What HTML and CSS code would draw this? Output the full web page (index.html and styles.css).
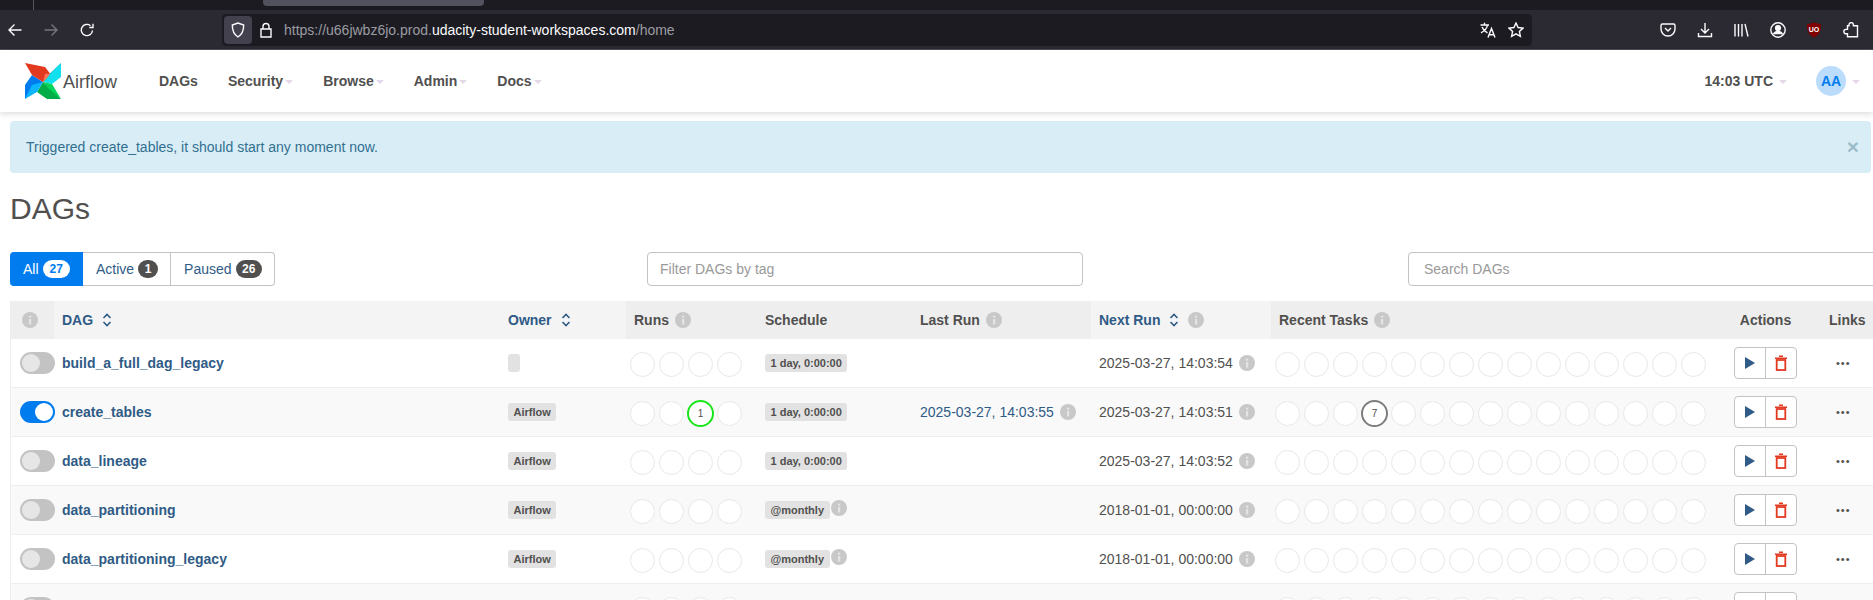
FILE: index.html
```html
<!DOCTYPE html>
<html lang="en">
<head>
    <meta charset="UTF-8">
    <title>Airflow - DAGs</title>
    <link rel="stylesheet" href="styles.css">
</head>
<body>
    <svg class="defs" width="0" height="0">
        <symbol id="info" viewBox="0 0 16 16">
            <circle cx="8" cy="8" r="8" fill="#c8c8c8"/>
            <rect x="7" y="7" width="2.2" height="5.5" fill="#e4e4e4"/>
            <rect x="7" y="3.6" width="2.2" height="2.2" fill="#e4e4e4"/>
        </symbol>
        <symbol id="sort" viewBox="0 0 10 14">
            <path d="M1.5 5 5 1.5 8.500 5M1.500 9 5 12.500 8.500 9" fill="none" stroke="currentColor" stroke-width="1.600"/>
        </symbol>
        <symbol id="play" viewBox="0 0 10 12">
            <path d="M0 0 10 6 0 12z" fill="#2f5b86"/>
        </symbol>
        <symbol id="trash" viewBox="0 0 12 16">
            <path d="M0 2.500h12V4H0zM4 .500h4V2H4z" fill="#e43921"/>
            <rect x="1.700" y="5" width="8.600" height="10" fill="none" stroke="#e43921" stroke-width="1.800"/>
        </symbol>
    </svg>

    <!-- browser chrome -->
    <div class="tabstrip">
        <span class="tab-sep"></span>
        <span class="tab"></span>
    </div>
    <div class="toolbar">
        <div class="nav-arrows">
            <svg class="tb-icon" viewBox="0 0 14 14"><path d="M13.500 7H1M6.500 1.500 1 7l5.500 5.500"/></svg>
            <svg class="tb-icon dim" viewBox="0 0 14 14"><path d="M.5 7H13M7.500 1.500 13 7l-5.500 5.500"/></svg>
            <svg class="tb-icon" viewBox="0 0 14 14"><path d="M12.500 7.500A5.600 5.600 0 1 1 10.500 2.700M13 .8v3.700H9.300"/></svg>
        </div>
        <div class="urlbar">
            <span class="shield-box">
                <svg class="tb-icon" viewBox="0 0 14 16"><path d="M7 1 1.300 3c0 6 1.500 9.500 5.700 12 4.200-2.500 5.700-6 5.700-12z"/></svg>
            </span>
            <svg class="lock" viewBox="0 0 12 16"><path d="M3 7V4.500a3 3 0 0 1 6 0V7M1 7h10v8H1z"/></svg>
            <span class="url">https://u66jwbz6jo.prod.<b>udacity-student-workspaces.com</b>/home</span>
            <div class="url-right">
                <svg class="tb-icon wide" viewBox="0 0 16 16"><path d="M.5 3h8.500M4.500 .8V3M7.500 3c-.5 3.500-3 6-6.500 7.800M2 5c1 2.500 3 4.500 5.500 5.800M8 15.500l3.500-9 3.500 9M9.200 12.800h4.600"/></svg>
                <svg class="tb-icon wide" viewBox="0 0 16 16"><path d="m8 1 2.100 4.500 4.900.6-3.600 3.300 1 4.900L8 11.800l-4.400 2.500 1-4.900L1 6.100l4.900-.6z"/></svg>
            </div>
        </div>
        <div class="tool-icons">
            <svg class="tb-icon wide" viewBox="0 0 16 16"><path d="M2.500 2h11A1.500 1.500 0 0 1 15 3.500V7A7 7 0 0 1 1 7V3.500A1.500 1.500 0 0 1 2.500 2zM5 6l3 3 3-3"/></svg>
            <svg class="tb-icon wide" viewBox="0 0 16 16"><path d="M8 1v10M4 7l4 4 4-4M1.500 11v3.500h13V11"/></svg>
            <svg class="tb-icon wide" viewBox="0 0 16 16"><path d="M2 2v12.500M5.500 2v12.500M9 2v12.500M12 2l3 12.500"/></svg>
            <svg class="tb-icon wide" viewBox="0 0 16 16"><circle cx="8" cy="8" r="7.200"/><circle cx="8" cy="6" r="2.400" fill="#fbfbfe"/><path d="M3.500 12.300c1-2 2.500-2.800 4.500-2.800s3.500.8 4.500 2.800" fill="#fbfbfe"/></svg>
            <svg class="ublock" viewBox="0 0 16 16"><path d="M8 .5 15 2.500c.3 6.500-1.800 10.500-7 13-5.200-2.500-7.300-6.500-7-13z" fill="#800000"/><text x="8" y="10.300" text-anchor="middle" class="ublock-text">UO</text></svg>
            <svg class="tb-icon wide" viewBox="0 0 16 16"><path d="M6 2.800a2.200 2.200 0 0 1 4.400 0v1h4.100v11h-10v-3H3a2.200 2.200 0 0 1 0-4.400h1.500V3.800H6z"/></svg>
        </div>
    </div>

    <!-- airflow navbar -->
    <nav class="navbar">
        <a class="brand">
            <svg class="pinwheel" viewBox="0 0 36 36">
                <path d="M36 0 25 10.500 18 19 30 15.500z" fill="#00b4c8"/>
                <path d="M36 0V14L27 21 18 19z" fill="#11e1ee"/>
                <path d="M36 36H22L12 29 18 19z" fill="#00ad46"/>
                <path d="M36 36 27 21 18 19 24 26z" fill="#04d659"/>
                <path d="M0 36V22L7 12 18 19z" fill="#017cee"/>
                <path d="M0 36 12 29 18 19 7 22z" fill="#0cb6ff"/>
                <path d="M0 0 20 4 25 10.500 18 19 7 12z" fill="#e43921"/>
                <path d="M25 10.500 22 15 18 19 20 11z" fill="#ff7557"/>
            </svg>
            <span class="brand-name">Airflow</span>
        </a>
        <a class="nav-link">DAGs</a>
        <a class="nav-link">Security<i class="caret"></i></a>
        <a class="nav-link">Browse<i class="caret"></i></a>
        <a class="nav-link">Admin<i class="caret"></i></a>
        <a class="nav-link">Docs<i class="caret"></i></a>
        <div class="nav-right">
            <a class="nav-link clock">14:03 UTC<i class="caret"></i></a>
            <span class="avatar">AA</span><i class="caret"></i>
        </div>
    </nav>

    <main class="content">
        <div class="alert">
            <span>Triggered create_tables, it should start any moment now.</span>
            <span class="alert-close">×</span>
        </div>

        <h2 class="title">DAGs</h2>

        <div class="filters">
            <div class="pills">
                <a class="pill active">All <span class="count">27</span></a>
                <a class="pill">Active <span class="count">1</span></a>
                <a class="pill">Paused <span class="count">26</span></a>
            </div>
            <input class="filter-input tags" type="text" placeholder="Filter DAGs by tag">
            <input class="filter-input search" type="text" placeholder="Search DAGs">
        </div>

        <table class="dags">
            <colgroup>
                <col class="c-info"><col class="c-dag"><col class="c-owner"><col class="c-runs"><col class="c-sched">
                <col class="c-last"><col class="c-next"><col class="c-tasks"><col class="c-actions"><col class="c-links">
            </colgroup>
            <thead>
                <tr>
                    <th class="center"><svg class="i16"><use href="#info"/></svg></th>
                    <th class="sortable"><span class="th-in">DAG <svg class="sort"><use href="#sort"/></svg></span></th>
                    <th class="sortable"><span class="th-in">Owner <svg class="sort"><use href="#sort"/></svg></span></th>
                    <th><span class="th-in">Runs <svg class="i16"><use href="#info"/></svg></span></th>
                    <th>Schedule</th>
                    <th><span class="th-in">Last Run <svg class="i16"><use href="#info"/></svg></span></th>
                    <th class="sortable"><span class="th-in">Next Run <svg class="sort"><use href="#sort"/></svg> <svg class="i16"><use href="#info"/></svg></span></th>
                    <th><span class="th-in">Recent Tasks <svg class="i16"><use href="#info"/></svg></span></th>
                    <th class="th-actions">Actions</th>
                    <th>Links</th>
                </tr>
            </thead>
            <tbody>
                <tr>
                    <td colspan="2" class="name-td"><div class="name-cell"><span class="switch"></span><a class="dag-link">build_a_full_dag_legacy</a></div></td>
                    <td><span class="badge empty"></span></td>
                    <td class="dots-cell"><div class="dots"><i></i><i></i><i></i><i></i></div></td>
                    <td><span class="badge">1 day, 0:00:00</span></td>
                    <td></td>
                    <td><span class="when">2025-03-27, 14:03:54 <svg class="i16"><use href="#info"/></svg></span></td>
                    <td class="dots-cell"><div class="dots"><i></i><i></i><i></i><i></i><i></i><i></i><i></i><i></i><i></i><i></i><i></i><i></i><i></i><i></i><i></i></div></td>
                    <td><div class="btns"><a class="btn"><svg class="play"><use href="#play"/></svg></a><a class="btn"><svg class="trash"><use href="#trash"/></svg></a></div></td>
                    <td class="more">•••</td>
                </tr>
                <tr>
                    <td colspan="2" class="name-td"><div class="name-cell"><span class="switch on"></span><a class="dag-link">create_tables</a></div></td>
                    <td><span class="badge">Airflow</span></td>
                    <td class="dots-cell"><div class="dots"><i></i><i></i><i class="success">1</i><i></i></div></td>
                    <td><span class="badge">1 day, 0:00:00</span></td>
                    <td><span class="when link">2025-03-27, 14:03:55 <svg class="i16"><use href="#info"/></svg></span></td>
                    <td><span class="when">2025-03-27, 14:03:51 <svg class="i16"><use href="#info"/></svg></span></td>
                    <td class="dots-cell"><div class="dots"><i></i><i></i><i></i><i class="none">7</i><i></i><i></i><i></i><i></i><i></i><i></i><i></i><i></i><i></i><i></i><i></i></div></td>
                    <td><div class="btns"><a class="btn"><svg class="play"><use href="#play"/></svg></a><a class="btn"><svg class="trash"><use href="#trash"/></svg></a></div></td>
                    <td class="more">•••</td>
                </tr>
                <tr>
                    <td colspan="2" class="name-td"><div class="name-cell"><span class="switch"></span><a class="dag-link">data_lineage</a></div></td>
                    <td><span class="badge">Airflow</span></td>
                    <td class="dots-cell"><div class="dots"><i></i><i></i><i></i><i></i></div></td>
                    <td><span class="badge">1 day, 0:00:00</span></td>
                    <td></td>
                    <td><span class="when">2025-03-27, 14:03:52 <svg class="i16"><use href="#info"/></svg></span></td>
                    <td class="dots-cell"><div class="dots"><i></i><i></i><i></i><i></i><i></i><i></i><i></i><i></i><i></i><i></i><i></i><i></i><i></i><i></i><i></i></div></td>
                    <td><div class="btns"><a class="btn"><svg class="play"><use href="#play"/></svg></a><a class="btn"><svg class="trash"><use href="#trash"/></svg></a></div></td>
                    <td class="more">•••</td>
                </tr>
                <tr>
                    <td colspan="2" class="name-td"><div class="name-cell"><span class="switch"></span><a class="dag-link">data_partitioning</a></div></td>
                    <td><span class="badge">Airflow</span></td>
                    <td class="dots-cell"><div class="dots"><i></i><i></i><i></i><i></i></div></td>
                    <td><span class="sched"><span class="badge">@monthly</span><svg class="i16"><use href="#info"/></svg></span></td>
                    <td></td>
                    <td><span class="when">2018-01-01, 00:00:00 <svg class="i16"><use href="#info"/></svg></span></td>
                    <td class="dots-cell"><div class="dots"><i></i><i></i><i></i><i></i><i></i><i></i><i></i><i></i><i></i><i></i><i></i><i></i><i></i><i></i><i></i></div></td>
                    <td><div class="btns"><a class="btn"><svg class="play"><use href="#play"/></svg></a><a class="btn"><svg class="trash"><use href="#trash"/></svg></a></div></td>
                    <td class="more">•••</td>
                </tr>
                <tr>
                    <td colspan="2" class="name-td"><div class="name-cell"><span class="switch"></span><a class="dag-link">data_partitioning_legacy</a></div></td>
                    <td><span class="badge">Airflow</span></td>
                    <td class="dots-cell"><div class="dots"><i></i><i></i><i></i><i></i></div></td>
                    <td><span class="sched"><span class="badge">@monthly</span><svg class="i16"><use href="#info"/></svg></span></td>
                    <td></td>
                    <td><span class="when">2018-01-01, 00:00:00 <svg class="i16"><use href="#info"/></svg></span></td>
                    <td class="dots-cell"><div class="dots"><i></i><i></i><i></i><i></i><i></i><i></i><i></i><i></i><i></i><i></i><i></i><i></i><i></i><i></i><i></i></div></td>
                    <td><div class="btns"><a class="btn"><svg class="play"><use href="#play"/></svg></a><a class="btn"><svg class="trash"><use href="#trash"/></svg></a></div></td>
                    <td class="more">•••</td>
                </tr>
                <tr>
                    <td colspan="2" class="name-td"><div class="name-cell"><span class="switch"></span></div></td>
                    <td></td>
                    <td class="dots-cell"><div class="dots"><i></i><i></i><i></i><i></i></div></td>
                    <td></td>
                    <td></td>
                    <td></td>
                    <td class="dots-cell"><div class="dots"><i></i><i></i><i></i><i></i><i></i><i></i><i></i><i></i><i></i><i></i><i></i><i></i><i></i><i></i><i></i></div></td>
                    <td><div class="btns"><a class="btn"><svg class="play"><use href="#play"/></svg></a><a class="btn"><svg class="trash"><use href="#trash"/></svg></a></div></td>
                    <td></td>
                </tr>
            </tbody>
        </table>
    </main>
</body>
</html>
```
FILE: styles.css
```css
html, body {
    height: 600px;
    margin: 0;
    overflow: hidden;
}

body {
    background: #fff;
    color: #51504f;
    font-family: 'Liberation Sans', Arial, sans-serif;
    font-size: 14px;
}

.defs {
    position: absolute;
}

/* browser chrome */
.tabstrip {
    display: flex;
    height: 10px;
    background: #1c1b22;
}

.tab-sep {
    width: 1px;
    height: 10px;
    margin-left: 33px;
    background: #55555f;
}

.tab {
    width: 221px;
    height: 6px;
    margin-left: 229px;
    background: #52525e;
    border-radius: 0 0 4px 4px;
}

.toolbar {
    display: flex;
    align-items: center;
    height: 40px;
    box-sizing: border-box;
    background: #2b2a33;
    border-bottom: 1px solid #4d4d57;
}

.tb-icon {
    width: 14px;
    height: 14px;
    fill: none;
    stroke: #fbfbfe;
    stroke-width: 1.4;
    flex: none;
}

.tb-icon.dim {
    stroke: #77767d;
}

.tb-icon.wide {
    width: 16px;
    height: 16px;
}

.nav-arrows {
    display: flex;
    gap: 22px;
    padding-left: 8px;
}

.urlbar {
    display: flex;
    align-items: center;
    width: 1310px;
    height: 32px;
    margin-left: 128px;
    padding-left: 2px;
    box-sizing: border-box;
    background: #1c1b22;
    border-radius: 4px;
}

.shield-box {
    display: flex;
    align-items: center;
    justify-content: center;
    width: 28px;
    height: 28px;
    background: #42414d;
    border-radius: 4px;
}

.shield-box .tb-icon {
    height: 16px;
}

.lock {
    width: 12px;
    height: 16px;
    margin-left: 8px;
    fill: none;
    stroke: #fbfbfe;
    stroke-width: 1.4;
}

.url {
    margin-left: 12px;
    color: #9b9ba1;
    font-size: 14px;
    white-space: nowrap;
}

.url b {
    color: #fbfbfe;
    font-weight: 400;
}

.url-right {
    display: flex;
    gap: 12px;
    margin-left: auto;
    padding-right: 8px;
}

.tool-icons {
    display: flex;
    align-items: center;
    gap: 20.6px;
    margin-left: 128px;
}

.ublock {
    width: 16px;
    height: 16px;
}

.ublock-text {
    fill: #fff;
    font-size: 7px;
    font-weight: 700;
}

/* navbar */
.navbar {
    display: flex;
    align-items: center;
    height: 62px;
    margin-bottom: 9px;
    background: #fff;
    box-shadow: 0 2px 6px rgba(0, 0, 0, 0.14);
    font-weight: 700;
}

.brand {
    display: flex;
    align-items: center;
    width: 144px;
    padding-left: 25px;
    box-sizing: border-box;
}

.pinwheel {
    width: 36px;
    height: 36px;
    flex: none;
}

.brand-name {
    margin: 3px 0 0 2px;
    font-size: 18px;
    font-weight: 400;
}

.nav-link {
    display: flex;
    align-items: center;
    padding: 0 15px;
}

.caret {
    width: 0;
    height: 0;
    margin: 2px 0 0 2px;
    border: 4px solid transparent;
    border-top-color: #e3d7e8;
    border-bottom: 0;
}

.nav-right {
    display: flex;
    align-items: center;
    margin-left: auto;
    padding-right: 13px;
}

.clock {
    padding: 0;
    margin-right: 29px;
}

.clock .caret {
    margin-left: 6px;
}

.avatar {
    display: flex;
    align-items: center;
    justify-content: center;
    width: 30px;
    height: 30px;
    margin-right: 4px;
    background: #bcdcfb;
    border-radius: 50%;
    color: #017cee;
}

/* page */
.content {
    padding-left: 10px;
}

.alert {
    display: flex;
    align-items: center;
    justify-content: space-between;
    height: 52px;
    padding: 0 12px 0 16px;
    margin-right: 2px;
    background: #d9edf7;
    border-radius: 4px;
    color: #31708f;
}

.alert-close {
    color: #9dbcc9;
    font-size: 21px;
    font-weight: 700;
}

.title {
    margin: 19px 0 27px;
    font-size: 30px;
    font-weight: 400;
    line-height: 33px;
}

.filters {
    display: flex;
    align-items: center;
    height: 34px;
    margin-bottom: 15px;
}

.pills {
    display: flex;
    width: 264px;
    height: 34px;
    flex: none;
}

.pill {
    display: flex;
    align-items: center;
    gap: 4px;
    padding: 0 12px 0 13px;
    background: #fff;
    border: 1px solid #c3c3c3;
    border-left-width: 0;
    color: #2f5b86;
}

.pill:first-child {
    border-radius: 4px 0 0 4px;
}

.pill:last-child {
    border-radius: 0 4px 4px 0;
}

.pill.active {
    background: #017cee;
    border-color: #017cee;
    color: #fff;
}

.count {
    min-width: 7px;
    padding: 3px 6.5px;
    background: #51504f;
    border-radius: 10px;
    color: #fff;
    font-size: 12px;
    font-weight: 700;
    line-height: 12px;
    text-align: center;
}

.pill.active .count {
    padding: 3px 7px;
    background: #fff;
    color: #017cee;
}

.filter-input {
    height: 34px;
    padding: 0 12px;
    box-sizing: border-box;
    background: #fff;
    border: 1px solid #c3c3c3;
    border-radius: 4px;
    color: #51504f;
    font: 14px 'Liberation Sans', Arial, sans-serif;
    outline: none;
    flex: none;
}

.filter-input::placeholder {
    color: #999;
}

.tags {
    width: 436px;
    margin-left: 373px;
}

.search {
    width: 500px;
    margin-left: 325px;
    padding-left: 15px;
}

/* table */
.dags {
    width: 1871px;
    table-layout: fixed;
    border-collapse: separate;
    border-spacing: 0;
    border-left: 1px solid #eee;
}

.c-info { width: 43px; }
.c-dag { width: 446px; }
.c-owner { width: 126px; }
.c-runs { width: 131px; }
.c-sched { width: 155px; }
.c-last { width: 179px; }
.c-next { width: 180px; }
.c-tasks { width: 455px; }
.c-actions { width: 95px; }
.c-links { width: 61px; }

.dags th {
    height: 38px;
    padding: 0 8px;
    box-sizing: border-box;
    background: #eee;
    font-weight: 700;
    text-align: left;
    white-space: nowrap;
}

.dags th.center {
    padding: 0 0 0 11px;
}

.dags th.sortable {
    background: #f4f4f4;
    color: #2f5b86;
}

.dags th.th-actions {
    padding-right: 24px;
    text-align: center;
}

.th-in {
    display: inline-flex;
    align-items: center;
    gap: 6px;
}

.i16 {
    display: block;
    width: 16px;
    height: 16px;
    flex: none;
}

.sort {
    width: 10px;
    height: 14px;
    margin: 0 3px;
    flex: none;
}

.dags td {
    height: 49px;
    padding: 0 8px;
    box-sizing: border-box;
    border-bottom: 1px solid #eee;
    white-space: nowrap;
}

.dags tbody tr:nth-child(even) td {
    background: #f9f9f9;
}

.dags td.dots-cell {
    padding: 2px 0 0 4px;
}

.dags td.name-td {
    padding: 0;
}

.name-cell {
    display: flex;
    align-items: center;
    gap: 7px;
    padding-left: 9px;
}

.dag-link {
    color: #2f5b86;
    font-weight: 700;
}

.switch {
    position: relative;
    width: 35px;
    height: 22px;
    background: #c3c3c3;
    border-radius: 11px;
    flex: none;
}

.switch::after {
    content: "";
    position: absolute;
    top: 2px;
    left: 2px;
    width: 18px;
    height: 18px;
    background: #e6e6e6;
    border-radius: 50%;
}

.switch.on {
    background: #017cee;
}

.switch.on::after {
    left: 15px;
    background: #fff;
}

.badge {
    display: inline-block;
    min-height: 18px;
    padding: 0 5.5px;
    box-sizing: border-box;
    background: #e2e2e2;
    border-radius: 3px;
    font-size: 11px;
    font-weight: 700;
    line-height: 18px;
    vertical-align: middle;
}

.badge.empty {
    width: 12px;
}

.sched {
    display: inline-flex;
    align-items: center;
    gap: 1px;
}

.sched .i16 {
    margin-top: -4px;
}

.when {
    display: inline-flex;
    align-items: center;
    gap: 6px;
}

.when.link {
    color: #2f5b86;
}

.dots {
    display: flex;
    gap: 4px;
}

.dots i {
    display: flex;
    align-items: center;
    justify-content: center;
    width: 25px;
    height: 25px;
    box-sizing: border-box;
    background: #fff;
    border: 1.5px solid #e8e8e8;
    border-radius: 50%;
    font-size: 10px;
    font-style: normal;
    flex: none;
}

.dots i.success {
    margin: -1px -1px;
    width: 27px;
    height: 27px;
    border: 2px solid #19e619;
}

.dots i.none {
    margin: -1px -1px;
    width: 27px;
    height: 27px;
    border: 2px solid #7d7d7d;
}

.btns {
    display: flex;
    width: 63px;
    height: 32px;
    box-sizing: border-box;
    background: #fff;
    border: 1px solid #c3c3c3;
    border-radius: 4px;
}

.btn {
    display: flex;
    align-items: center;
    justify-content: center;
    flex: 1;
}

.btn + .btn {
    border-left: 1px solid #c3c3c3;
}

.play {
    width: 10px;
    height: 12px;
}

.trash {
    width: 12px;
    height: 16px;
}

.dags td.more {
    padding-left: 15px;
    color: #51504f;
    font-size: 11px;
    letter-spacing: 1px;
}
```
